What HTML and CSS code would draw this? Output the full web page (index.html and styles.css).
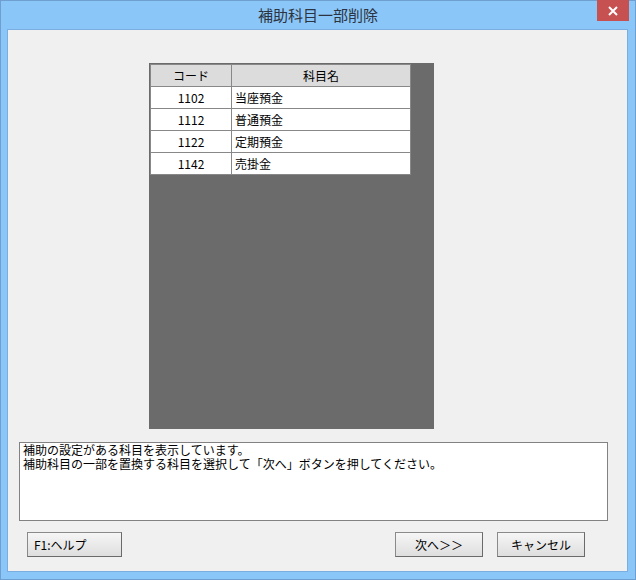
FILE: index.html
```html
<!doctype html>
<html>
    <head>
        <title>補助科目一部削除</title>
        <link rel="stylesheet" href="styles.css">
    </head>
    <body>
        <div class="window">
            <header class="titlebar">
                <span class="title">補助科目一部削除</span>
                <button class="close" aria-label="閉じる">
                    <svg width="10" height="10" viewBox="0 0 10 10"><path d="M1 1 L9 9 M9 1 L1 9" stroke="#fff" stroke-width="2"/></svg>
                </button>
            </header>
            <main class="client">
                <div class="panel">
                    <table class="grid">
                        <thead>
                            <tr><th class="code">コード</th><th class="name">科目名</th></tr>
                        </thead>
                        <tbody>
                            <tr><td class="code">1102</td><td class="name">当座預金</td></tr>
                            <tr><td class="code">1112</td><td class="name">普通預金</td></tr>
                            <tr><td class="code">1122</td><td class="name">定期預金</td></tr>
                            <tr><td class="code">1142</td><td class="name">売掛金</td></tr>
                        </tbody>
                    </table>
                </div>
                <div class="message">補助の設定がある科目を表示しています。<br>補助科目の一部を置換する科目を選択して「次へ」ボタンを押してください。</div>
                <div class="buttons">
                    <button class="btn help">F1:ヘルプ</button>
                    <div class="right">
                        <button class="btn">次へ＞＞</button>
                        <button class="btn">キャンセル</button>
                    </div>
                </div>
            </main>
        </div>
    </body>
</html>
```

FILE: styles.css
```css
html, body {
    margin: 0;
    padding: 0;
}
body {
    font-family: "Noto Sans CJK JP", "Liberation Sans", sans-serif;
    font-size: 12px;
    color: #000;
}
.window {
    width: 636px;
    height: 580px;
    box-sizing: border-box;
    background: #8bc6f8;
    border: 1px solid #6f9fd0;
    display: flex;
    flex-direction: column;
}
.titlebar {
    height: 28px;
    position: relative;
    display: flex;
    justify-content: center;
    align-items: center;
}
.title {
    font-size: 15px;
    color: #2b3440;
    margin-top: -2px;
}
.close {
    position: absolute;
    top: -1px;
    right: 6px;
    width: 32px;
    height: 21px;
    border: none;
    padding: 0;
    background: #c75050;
    display: flex;
    align-items: center;
    justify-content: center;
}
.client {
    margin: 0 7px 7px 6px;
    border: 1px solid #7aaee0;
    background: #f0f0f0;
    flex: 1;
    display: flex;
    flex-direction: column;
}
.panel {
    margin: 33px 0 0 141px;
    width: 285px;
    height: 366px;
    background: #6b6b6b;
    box-sizing: border-box;
    padding: 1px;
}
.grid {
    border-collapse: collapse;
    width: 261px;
    background: #fff;
}
.grid th, .grid td {
    border: 1px solid #888;
    height: 21px;
    padding: 0;
    font-weight: normal;
    line-height: 20px;
}
.grid th {
    background: #dcdcdc;
    text-align: center;
}
.grid th.code, .grid td.code {
    width: 80px;
    text-align: center;
}
.grid td.name {
    text-align: left;
    padding-left: 3px;
}
.message {
    margin: 13px 0 0 11px;
    width: 589px;
    height: 79px;
    box-sizing: border-box;
    border: 1px solid #828282;
    background: #fff;
    padding: 0 3px;
    line-height: 14px;
}
.buttons {
    display: flex;
    justify-content: space-between;
    margin: 11px 42px 0 19px;
}
.right {
    display: flex;
    gap: 14px;
}
.btn {
    width: 88px;
    height: 25px;
    font-family: inherit;
    font-size: 12px;
    color: #000;
    border: 1px solid #8a8a8a;
    border-right-color: #6a6a6a;
    border-bottom-color: #6a6a6a;
    background: linear-gradient(#f6f6f6, #dedede);
    padding: 0;
}
.btn.help {
    width: 95px;
    text-align: left;
    padding-left: 6px;
}
```
